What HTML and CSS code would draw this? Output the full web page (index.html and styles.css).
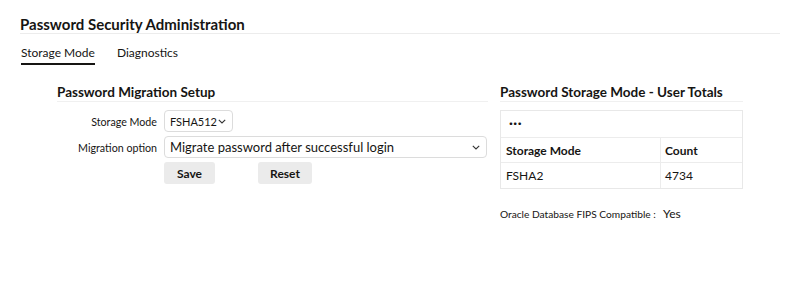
FILE: index.html
```html
<!DOCTYPE html>
<html>
<head>
<meta charset="utf-8">
<link rel="stylesheet" href="styles.css">
</head>
<body>
<div class="page">
  <h1 class="title">Password Security Administration</h1>
  <div class="tabs">
    <span class="tab active">Storage Mode</span>
    <span class="tab">Diagnostics</span>
  </div>
  <div class="content">
    <section class="col left">
      <h2 class="section-title">Password Migration Setup</h2>
      <div class="form">
        <label class="lbl">Storage Mode</label>
        <div class="ctl"><div class="select small"><span>FSHA512</span><svg class="chev" width="8" height="5" viewBox="0 0 8 5"><path d="M0.8 0.8 L4 4 L7.2 0.8" fill="none" stroke="#333" stroke-width="1.1"/></svg></div></div>
        <label class="lbl">Migration option</label>
        <div class="ctl"><div class="select wide"><span>Migrate password after successful login</span><svg class="chev" width="8" height="5" viewBox="0 0 8 5"><path d="M0.8 0.8 L4 4 L7.2 0.8" fill="none" stroke="#333" stroke-width="1.1"/></svg></div></div>
        <span></span>
        <div class="ctl buttons"><button class="btn save">Save</button><button class="btn reset">Reset</button></div>
      </div>
    </section>
    <section class="col right">
      <h2 class="section-title">Password Storage Mode - User Totals</h2>
      <div class="table">
        <div class="toolbar">&middot;&middot;&middot;</div>
        <div class="row head"><div class="cell c1">Storage Mode</div><div class="cell c2">Count</div></div>
        <div class="row"><div class="cell c1">FSHA2</div><div class="cell c2">4734</div></div>
      </div>
      <div class="fips"><span class="fips-lbl">Oracle Database FIPS Compatible :</span><span class="fips-val">Yes</span></div>
    </section>
  </div>
</div>
</body>
</html>
```
FILE: styles.css
```css
* { box-sizing: border-box; }
body {
  margin: 0;
  background: #fff;
  font-family: Lato, "Noto Sans", sans-serif;
  color: #161513;
}
.page {
  padding: 15px 20px 0 20px;
}
.title {
  margin: 0;
  font-size: 15px;
  font-weight: 700;
  line-height: 18px;
  padding-bottom: 0;
  border-bottom: 1px solid #ececec;
}
.tabs {
  display: flex;
  gap: 22px;
  margin-top: 10px;
  padding-left: 1px;
}
.tab {
  font-size: 12px;
  line-height: 18px;
  padding-bottom: 1px;
  border-bottom: 2px solid transparent;
}
.tab.active {
  border-bottom-color: #161513;
}
.content {
  display: flex;
  gap: 12px;
  padding-left: 37px;
  margin-top: 19px;
}
.col.left { width: 431px; }
.col.right { width: 243px; }
.section-title {
  margin: 0;
  font-size: 13.5px;
  font-weight: 700;
  line-height: 17px;
  padding-bottom: 0;
  border-bottom: 1px solid #f0f0f0;
}
.form {
  display: grid;
  grid-template-columns: 100px auto;
  column-gap: 7px;
  row-gap: 4px;
  margin-top: 8px;
  align-items: center;
}
.lbl {
  text-align: right;
  font-size: 10.7px;
  color: #161513;
}
.select {
  display: flex;
  align-items: center;
  justify-content: space-between;
  height: 22px;
  border: 1px solid #dcdcdc;
  border-radius: 4px;
  padding: 0 6px 0 5px;
  font-size: 13px;
  background: #fff;
}
.select.small { width: 69px; font-size: 11px; padding: 0 6px 0 5px; }
.select.wide { width: 323px; }
.chev { flex: none; }
.buttons {
  display: flex;
  gap: 43px;
}
.btn {
  font-family: inherit;
  font-weight: 700;
  font-size: 12px;
  color: #161513;
  background: #ebebeb;
  border: none;
  border-radius: 3px;
  height: 22px;
  padding: 0;
}
.btn.save { width: 51px; }
.btn.reset { width: 54px; }
.table {
  margin-top: 8px;
  border: 1px solid #e8e8e8;
  font-size: 12px;
}
.toolbar {
  height: 27px;
  padding-left: 8px;
  font-size: 14px;
  font-weight: 700;
  line-height: 24px;
  letter-spacing: 0.5px;
  border-bottom: 1px solid #ececec;
}
.row {
  display: flex;
  height: 25px;
  border-bottom: 1px solid #ececec;
}
.row:last-child { border-bottom: none; }
.cell {
  display: flex;
  align-items: center;
  padding-left: 5px;
}
.c1 { width: 160px; border-right: 1px solid #ececec; }
.c2 { flex: 1; padding-left: 4px; }
.head .cell { font-weight: 700; }
.fips {
  display: flex;
  align-items: center;
  margin-top: 17px;
}
.fips-lbl {
  font-size: 10.2px;
  width: 163px;
}
.fips-val {
  font-size: 12px;
}
```
